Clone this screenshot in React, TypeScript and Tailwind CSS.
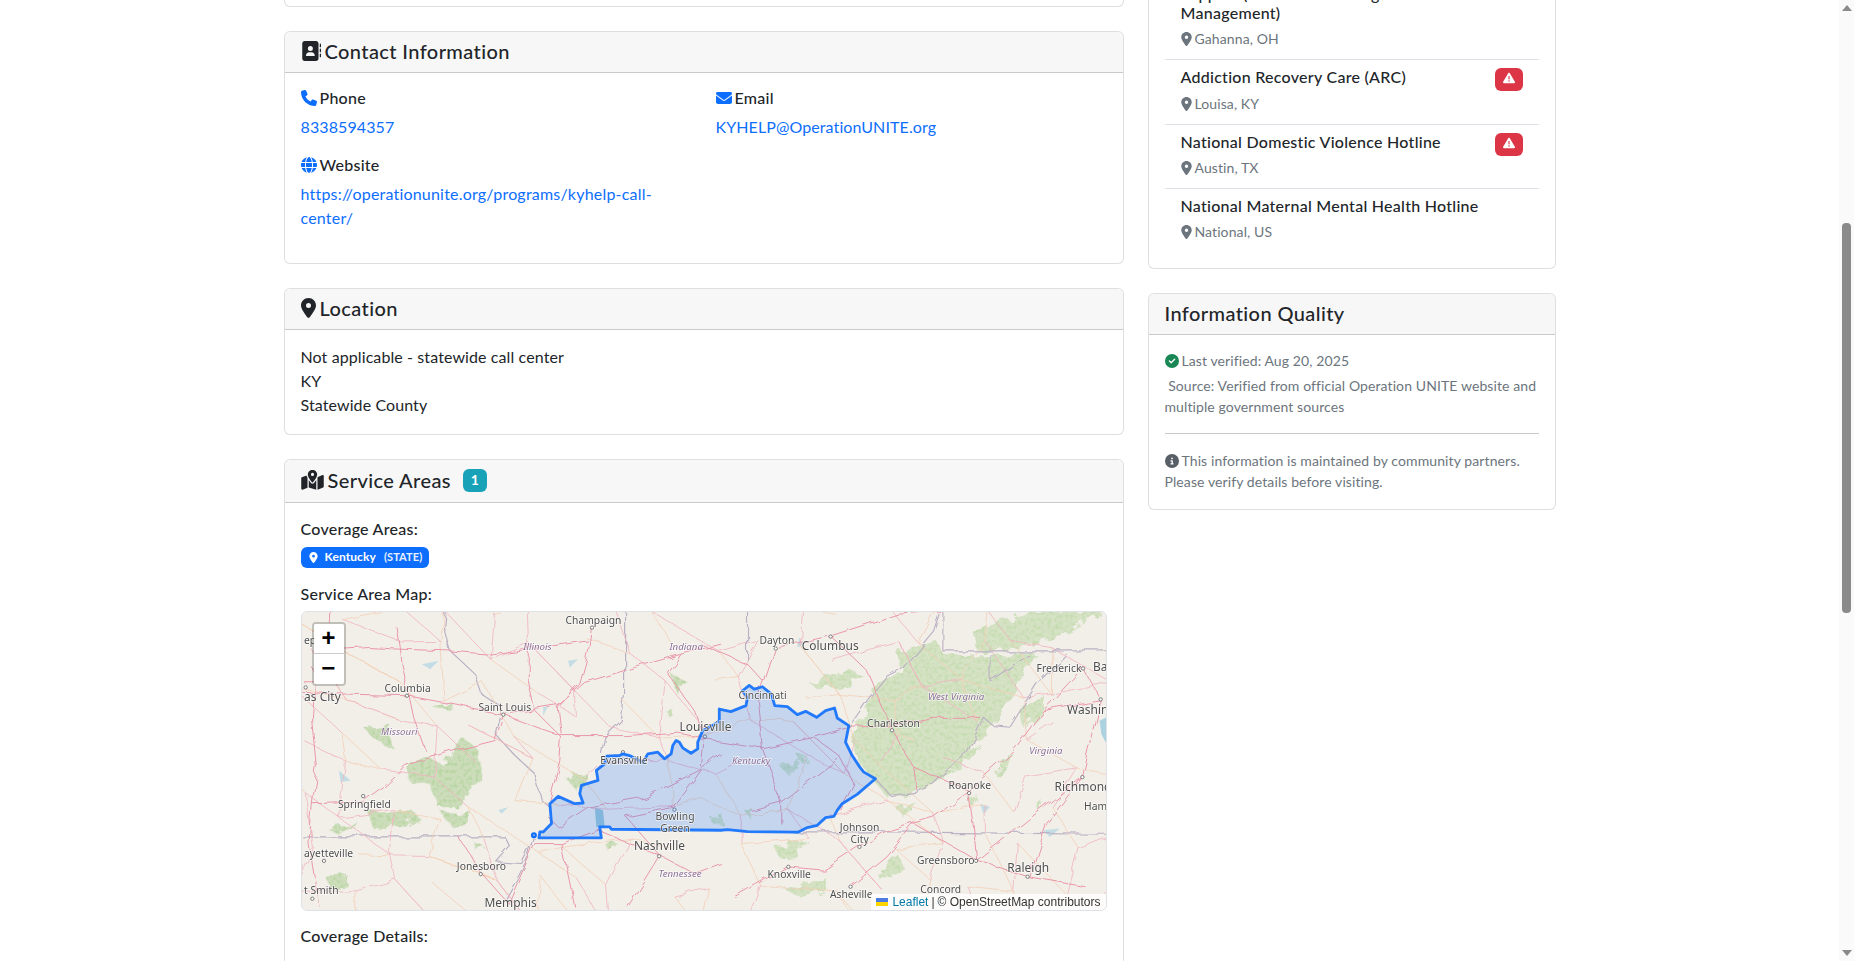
import type { ReactNode } from "react";
import {
  FaAddressBook,
  FaCircleCheck,
  FaCircleInfo,
  FaEnvelope,
  FaGlobe,
  FaLocationDot,
  FaMapLocationDot,
  FaPhone,
  FaTriangleExclamation,
} from "react-icons/fa6";

// map is drawn in a 3x space, x from 3 to 2421, y from 3 to 900
const kentuckyWest = [
  [712, 683], [900, 683], [895, 650], [925, 650], [930, 657], [1260, 660],
];
const kentuckyEast = [
  [80, 658], [140, 664], [292, 666], [320, 652], [350, 645], [375, 622], [400, 618], [410, 600],
  [425, 580], [470, 552], [525, 505], [490, 485], [478, 470], [455, 435], [435, 395], [445, 345],
  [410, 322], [402, 292], [375, 300], [348, 320], [315, 302], [290, 312], [260, 288], [222, 285],
  [212, 250], [185, 228], [160, 235], [145, 224], [125, 240], [140, 262], [135, 285], [90, 303], [55, 295],
];
const kentuckyNorth = [
  [1255, 330], [1240, 342], [1205, 360], [1190, 395], [1190, 415], [1170, 428], [1145, 412], [1135, 395],
  [1125, 390], [1115, 405], [1110, 430], [1090, 445], [1070, 425], [1040, 430], [1025, 455], [985, 435],
  [965, 430], [955, 435], [915, 437], [910, 460], [885, 480], [890, 510], [840, 525], [835, 550],
  [845, 578], [820, 580], [770, 558], [745, 580], [750, 640], [725, 665], [715, 665],
];
const kentucky = [...kentuckyWest, ...kentuckyEast.map(([x, y]) => [x + 1200, y]), ...kentuckyNorth]
  .map((p) => p.join(","))
  .join(" ");

const westPink = [
  "0,245 130,250 315,255 450,280 605,312 770,285 850,215 1000,170 1140,130 1260,100",
  "605,312 720,355 780,375 970,375 1130,365 1210,380",
  "605,312 580,390 420,430 310,465 240,530 180,575 30,580",
  "85,0 85,30 40,210 30,320 45,470 30,580 20,700 50,890",
  "285,50 295,110 300,160 320,250 335,320 370,420",
  "40,120 200,110 295,115 440,120 560,130 680,115 860,90",
  "680,100 680,210 700,300 780,380 775,450 745,570",
  "870,50 860,130 835,220 770,290 780,375",
  "1210,380 1200,480 1120,590 975,620 1075,735",
  "1075,735 890,660 780,700 700,700 620,880",
  "1075,735 1180,790 1260,760",
  "1075,735 980,890",
  "780,700 820,890",
  "540,790 470,680",
  "540,790 620,880",
  "1140,130 1100,190 1180,300 1210,380",
  "1260,430 1195,480 1030,560 860,590 770,650 740,620",
  "0,210 40,210 30,170",
];
const westBorders = [
  "430,0 425,50 445,120 520,190 540,250 600,290 580,370 640,435 700,490 720,570 745,590",
  "695,680 680,740 650,800 610,870",
  "970,0 970,250 960,330 910,380 900,430",
  "0,680 610,680 625,710 585,755 660,760 690,700",
];
const eastPink = [
  "0,100 140,160 190,215 170,270 185,415 210,480 240,575 240,640",
  "190,215 225,110 390,75",
  "390,75 500,180 575,360 640,470 650,540",
  "185,415 340,380 445,350 575,345 700,320 840,320",
  "0,385 185,415",
  "390,75 590,10 720,0",
  "640,470 805,540 940,420 1030,300 1205,270",
  "805,545 700,620 570,660 480,710 370,780 260,770 100,860",
  "1148,500 1040,640 990,800",
  "1148,500 1205,270",
  "1148,500 830,750",
  "830,750 640,640 560,740 450,830",
  "1030,300 1150,170 1200,260",
  "150,600 240,575 420,440",
  "340,380 420,440 460,520 420,600",
  "805,545 820,650 830,750 985,800 1157,830",
];
const eastBorders = [
  "140,0 140,160",
  "525,505 570,555 650,545 700,520 760,460 800,430 850,320 880,345 930,350 1010,220 1100,130",
  "450,350 505,270 560,200 600,180 700,60 720,0",
  "728,0 728,120 1220,120",
  "870,130 870,210 990,130",
  "290,665 570,665 1220,672",
];

// zoom6 space, so 1200 left of the real x
const eastForest = [
  "590,120 710,90 730,130 1010,130 960,210 870,350 780,470 640,550 560,560 470,450 450,370 490,310 510,240 600,180",
  "820,60 1000,0 1220,0 1100,60 930,120 830,120",
  "960,300 1030,250 1020,310 970,350",
  "880,480 940,430 930,470 890,500",
  "590,590 640,570 630,600 600,610",
  "330,220 430,180 490,195 440,225 350,235",
  "225,710 320,690 290,740 240,745",
  "255,840 380,805 370,840 290,860",
  "530,790 590,730 610,770 540,810",
  "240,470 300,450 270,500",
  "285,430 320,440 310,465",
  "30,620 60,605 65,640 35,640",
  "130,600 150,590 145,620",
  "800,560 830,550 810,590",
  "1010,590 1030,570 1020,600",
];
const westForest = [
  "310,465 370,440 420,460 480,380 520,410 545,500 500,540 490,590 410,590 385,520 320,510",
  "420,605 510,610 500,650 450,650",
  "195,600 240,610 330,600 360,630 280,650 220,660",
  "70,650 170,640 110,670",
  "185,350 260,340 270,410 220,390",
  "790,500 860,490 835,550",
  "70,800 135,795 125,835 85,835",
  "900,690 950,700 920,720",
  "1110,190 1160,215 1130,250",
  "1095,300 1110,290 1105,320",
  "390,290 460,280 440,300",
  "520,700 550,710 520,720",
];
const water = [
  "360,160 410,150 385,175",
  "110,480 145,510 115,515",
  "725,290 740,285 725,315",
  "590,600 620,590 600,610",
  "800,150 830,145 805,170",
  "1495,80 1510,100 1490,110",
  "2230,660 2280,655 2250,680",
  "1900,880 1930,860 1920,890",
  "2040,580 2070,590 2050,610",
];

// small roads: a jittered grid, same numbers on every run
const noise = (a: number, b: number) => {
  const v = Math.sin(a * 127.1 + b * 311.7) * 43758.5453;
  return v - Math.floor(v);
};
const gridPoint = (i: number, j: number) => [
  i * 135 + (noise(i, j) - 0.5) * 90,
  j * 118 + (noise(j + 9, i + 3) - 0.5) * 80,
];
const minorPink: string[] = [];
const minorOrange: string[] = [];
for (let i = 0; i < 19; i++) {
  for (let j = 0; j < 9; j++) {
    const from = gridPoint(i, j).join(",");
    const right = gridPoint(i + 1, j + (noise(i, j + 5) > 0.6 ? 1 : 0)).join(",");
    const down = gridPoint(i + (noise(i + 2, j) > 0.6 ? 1 : 0), j + 1).join(",");
    if (noise(i + 7, j + 1) > 0.3) (noise(i, j + 11) > 0.5 ? minorPink : minorOrange).push(`${from} ${right}`);
    if (noise(i + 4, j + 8) > 0.3) (noise(i + 13, j) > 0.5 ? minorPink : minorOrange).push(`${from} ${down}`);
  }
}

type Label = [string, number, number, number?, boolean?];

const labels: Label[] = [
  ["Champaign", 792, 38],
  ["Illinois", 665, 116, 29, true],
  ["Indiana", 1105, 118, 29, true],
  ["Columbia", 247, 243],
  ["as City", 5, 272, 36],
  ["ep", 5, 100],
  ["Saint Louis", 530, 300],
  ["Missouri", 237, 372, 29, true],
  ["Louisville", 1135, 362, 36],
  ["Evansville", 897, 460],
  ["Springfield", 107, 593],
  ["Bowling", 1063, 630],
  ["Green", 1077, 666],
  ["Nashville", 998, 720, 36],
  ["ayetteville", 5, 740],
  ["Jonesboro", 465, 780],
  ["Memphis", 548, 892, 36],
  ["t Smith", 5, 853],
  ["Tennessee", 1072, 802, 29, true],
  ["Dayton", 1376, 100],
  ["Columbus", 1503, 118, 36],
  ["Cincinnati", 1313, 264],
  ["Kentucky", 1293, 461, 29, true],
  ["West Virginia", 1883, 268, 29, true],
  ["Charleston", 1700, 348],
  ["Frederick", 2210, 185],
  ["Ba", 2380, 180, 36],
  ["Washin", 2302, 310, 36],
  ["Virginia", 2188, 430, 29, true],
  ["Roanoke", 1945, 535],
  ["Richmond", 2264, 543, 36],
  ["Ham", 2353, 600],
  ["Johnson", 1618, 662],
  ["City", 1650, 698],
  ["Knoxville", 1400, 803],
  ["Greensboro", 1850, 762],
  ["Raleigh", 2122, 785, 36],
  ["Asheville", 1588, 865],
  ["Concord", 1860, 850],
];

const towns = [
  [872, 50], [315, 255], [605, 312], [183, 557], [1120, 598], [1074, 738], [537, 792], [65, 752], [30, 866],
  [1425, 113], [1590, 77], [1775, 359], [2007, 548], [2348, 500], [1677, 710], [1463, 770], [2028, 752],
  [2183, 800], [2350, 173], [2403, 266], [1650, 830], [10, 230], [965, 425], [1212, 378],
];

function Lines({ items, color, width = 3 }: { items: string[]; color: string; width?: number }) {
  return (
    <g fill="none" stroke={color} strokeWidth={width} strokeLinejoin="round">
      {items.map((p) => (
        <polyline key={p} points={p} />
      ))}
    </g>
  );
}

function ServiceMap() {
  return (
    <div className="relative h-[300px] overflow-hidden rounded-md border border-[#dee2e6] bg-[#f2efe9]">
      <svg viewBox="3 3 2418 897" className="block h-[298px] w-[806px] blur-[0.35px]">
        <defs>
          <filter id="rough" x="-5%" y="-5%" width="110%" height="110%">
            <feTurbulence type="fractalNoise" baseFrequency="0.025" numOctaves="3" seed="4" result="edge" />
            <feDisplacementMap in="SourceGraphic" in2="edge" scale="38" result="shape" />
            <feTurbulence type="fractalNoise" baseFrequency="0.09" numOctaves="2" seed="11" result="speck" />
            <feColorMatrix
              in="speck"
              type="matrix"
              values="0 0 0 0 0  0 0 0 0 0  0 0 0 0 0  3 0 0 0 -1.3"
              result="speckAlpha"
            />
            <feComposite in="shape" in2="speckAlpha" operator="in" result="dappled" />
            <feComponentTransfer in="shape" result="faded">
              <feFuncA type="linear" slope="0.65" />
            </feComponentTransfer>
            <feMerge>
              <feMergeNode in="faded" />
              <feMergeNode in="dappled" />
            </feMerge>
          </filter>
          <filter id="wiggle" x="-5%" y="-5%" width="110%" height="110%">
            <feTurbulence type="fractalNoise" baseFrequency="0.02" numOctaves="2" seed="8" />
            <feDisplacementMap in="SourceGraphic" scale="22" />
          </filter>
        </defs>
        <rect x="3" y="3" width="2418" height="897" fill="#f2efe9" />
        <g filter="url(#rough)">
          {westForest.map((p) => (
            <polygon key={p} points={p} fill="#b8d4a2" />
          ))}
          <g transform="translate(1200 0)">
            {eastForest.map((p) => (
              <polygon key={p} points={p} fill="#c5dbb0" />
            ))}
          </g>
        </g>
        {water.map((p) => (
          <polygon key={p} points={p} fill="#c4dde4" />
        ))}
        <polygon points="880,590 905,600 910,650 885,650" fill="#9fc9d4" />
        <polygon points="2400,330 2421,320 2421,400 2405,370" fill="#aad3df" />
        <g filter="url(#wiggle)">
          <Lines items={westBorders} color="#b9aec2" width={3.5} />
          <Lines items={minorOrange} color="#f3d0b6" width={2.5} />
          <Lines items={minorPink} color="#f0b4c0" width={2.5} />
          <Lines items={westPink} color="#ea96a9" />
          <g transform="translate(1200 0)">
            <Lines items={eastBorders} color="#bcb1c4" width={3.5} />
            <Lines items={eastPink} color="#ea96a9" />
          </g>
        </g>
        {towns.map(([x, y]) => (
          <circle key={`${x}-${y}`} cx={x} cy={y} r="5" fill="#fff" stroke="#666" strokeWidth="2.5" />
        ))}
        <polygon
          points={kentucky}
          fill="#0d6efd"
          fillOpacity="0.2"
          stroke="#0d6efd"
          strokeOpacity="0.9"
          strokeWidth="8.5"
          strokeLinejoin="round"
        />
        <circle cx="697" cy="675" r="6" fill="#7fb0f0" stroke="#0d6efd" strokeWidth="6" />
        <g className="[font-family:'Noto_Sans',sans-serif]">
          {labels.map(([text, x, y, size = 31, italic]) => (
            <text
              key={text}
              x={x}
              y={y}
              fontSize={size}
              fontStyle={italic ? "italic" : "normal"}
              fill={italic ? "#8a6f96" : "#4d4d4d"}
              stroke="#fff"
              strokeOpacity="0.75"
              strokeWidth="4"
              className="[paint-order:stroke]"
            >
              {text}
            </text>
          ))}
        </g>
      </svg>
      <div className="absolute left-[10px] top-[10px] flex w-[34px] flex-col rounded-[4px] border-2 border-black/20 bg-clip-padding">
        <button className="flex h-[30px] items-center justify-center rounded-t-[2px] border-b border-[#ccc] bg-white pt-[3px] text-[24px] font-bold leading-none text-black [font-family:'Liberation_Mono',monospace]">
          +
        </button>
        <button className="flex h-[30px] items-center justify-center rounded-b-[2px] bg-white pt-[3px] text-[24px] font-bold leading-none text-black [font-family:'Liberation_Mono',monospace]">
          −
        </button>
      </div>
      <div className="absolute bottom-0 right-0 flex h-[16px] items-center bg-white/80 px-[5px] text-[12px] leading-none tracking-normal text-[#333] [font-family:'Liberation_Sans',sans-serif]">
        <svg viewBox="0 0 12 8" className="mr-[4px] h-[8px] w-[12px]">
          <rect width="12" height="4" fill="#4C7BE1" />
          <rect y="4" width="12" height="4" fill="#FFD500" />
        </svg>
        <a className="text-[#0078A8]">Leaflet</a>
        <span className="mx-[3px]">|</span>© OpenStreetMap contributors
      </div>
    </div>
  );
}

function Card({ header, children, className = "" }: { header?: ReactNode; children: ReactNode; className?: string }) {
  return (
    <div className={`rounded-md border border-black/[.125] bg-white ${className}`}>
      {header && (
        <div className="flex items-center rounded-t-md border-b border-black/[.18] bg-[#f7f7f7] px-4 pb-[9px] pt-[7px]">
          {header}
        </div>
      )}
      <div className="px-4 pb-[17px] pt-[15px]">{children}</div>
    </div>
  );
}

function Label({ icon, children }: { icon?: ReactNode; children: ReactNode }) {
  return (
    <h6 className="mb-2 flex h-[19.2px] items-center gap-[3px] text-base font-medium leading-[19.2px] tracking-[0.25px]">
      {icon}
      {children}
    </h6>
  );
}

function Nearby({ title, place, alert }: { title: ReactNode; place: string; alert?: boolean }) {
  return (
    <div className="flex justify-between border-b border-[#dee2e6] px-4 pb-2 pt-[7px] last:border-b-0">
      <div>
        <div className="mb-[5px] text-base font-medium leading-[19.2px] tracking-[0.27px]">{title}</div>
        <div className="flex h-6 items-center gap-[3px] text-sm text-[#6c757d]">
          <FaLocationDot className="h-[14px] w-[11px]" />
          {place}
        </div>
      </div>
      {alert && (
        <span className="mt-px flex h-[23px] w-[28px] items-center justify-center self-start rounded-md bg-[#dc3545] pb-[3px]">
          <FaTriangleExclamation className="h-[12px] w-[12px] text-white" />
        </span>
      )}
    </div>
  );
}

export default function App() {
  return (
    <div className="flex h-[961px] overflow-hidden bg-white tracking-[0.1px] text-[#212529] [font-family:Lato,sans-serif]">
      <div className="flex flex-1 gap-6 pl-[283.5px]">
        <div className="flex w-[840px] flex-col gap-6">
          <div className="-mt-[93px] h-[100px] shrink-0 rounded-md border border-black/[.125] bg-white" />

          <Card
            header={
              <h5 className="flex h-6 items-center gap-[4px] text-xl font-medium leading-6 tracking-[0.4px]">
                <FaAddressBook className="h-5 w-5" />
                Contact Information
              </h5>
            }
          >
            <div className="grid grid-cols-2 gap-x-6">
              <div className="mb-4">
                <Label icon={<FaPhone className="h-4 w-4 text-[#0d6efd]" />}>Phone</Label>
                <a className="text-[#0d6efd]">8338594357</a>
              </div>
              <div className="mb-4">
                <Label icon={<FaEnvelope className="h-4 w-4 text-[#0d6efd]" />}>Email</Label>
                <a className="text-[#0d6efd]">KYHELP@OperationUNITE.org</a>
              </div>
              <div className="mb-4">
                <Label icon={<FaGlobe className="h-4 w-4 text-[#0d6efd]" />}>Website</Label>
                <a className="tracking-[0.2px] text-[#0d6efd]">https://operationunite.org/programs/kyhelp-call-center/</a>
              </div>
            </div>
          </Card>

          <Card
            header={
              <h5 className="flex h-6 items-center gap-[4px] text-xl font-medium leading-6 tracking-[0.4px]">
                <FaLocationDot className="h-5 w-[15px]" />
                Location
              </h5>
            }
          >
            <p>
              Not applicable - statewide call center
              <br />
              KY
              <br />
              Statewide County
            </p>
          </Card>

          <Card
            header={
              <div className="flex h-[26px] items-center">
                <h5 className="flex items-center gap-[4px] text-xl font-medium leading-6 tracking-[0.4px]">
                  <FaMapLocationDot className="h-5 w-[23px]" />
                  Service Areas
                </h5>
                <span className="ml-3 flex h-[23px] w-6 items-center justify-center rounded-md bg-[#17a2b8] text-sm font-bold text-white">
                  1
                </span>
              </div>
            }
          >
            <div className="pt-px">
              <Label>Coverage Areas:</Label>
              <span className="mb-4 flex h-[21px] w-[128px] items-center rounded-md bg-[#0d6efd] pl-[8px] text-xs font-bold text-white">
                <FaLocationDot className="mr-[7px] h-[11px] w-[9px]" />
                Kentucky
                <span className="ml-[8px] text-[11px] opacity-90">(STATE)</span>
              </span>
              <Label>Service Area Map:</Label>
              <ServiceMap />
              <div className="mt-[15px]">
                <Label>Coverage Details:</Label>
              </div>
            </div>
          </Card>
        </div>

        <div className="flex w-[408px] flex-col gap-6">
          <Card className="-mt-[39px] shrink-0">
            <div className="-mb-px">
              <Nearby
                title={
                  <>
                    Support (Care Coordinating
                    <br />
                    Management)
                  </>
                }
                place="Gahanna, OH"
              />
              <Nearby title="Addiction Recovery Care (ARC)" place="Louisa, KY" alert />
              <Nearby title="National Domestic Violence Hotline" place="Austin, TX" alert />
              <Nearby title="National Maternal Mental Health Hotline" place="National, US" />
            </div>
          </Card>

          <Card
            className="shrink-0"
            header={<h5 className="h-6 text-xl font-medium leading-6 tracking-[0.4px]">Information Quality</h5>}
          >
            <div className="text-sm leading-[21px] text-[#6c757d]">
              <div className="mb-1 flex items-center gap-[3px]">
                <FaCircleCheck className="h-[14px] w-[14px] text-[#198754]" />
                Last verified: Aug 20, 2025
              </div>
              <div>&nbsp;Source: Verified from official Operation UNITE website and multiple government sources</div>
              <hr className="my-4 border-[#c9c9c9]" />
              <div>
                <FaCircleInfo className="mr-[3px] inline h-[14px] w-[14px] align-[-2px] text-[#595f66]" />
                This information is maintained by community partners. Please verify details before visiting.
              </div>
            </div>
          </Card>
        </div>
      </div>

      {/* scrollbar drawn by hand, the page here is a still */}
      <div className="flex w-[15px] shrink-0 flex-col items-center bg-[#fafafa]">
        <svg viewBox="0 0 10 6" className="mt-[5px] h-[6px] w-[10px]">
          <polygon points="5,0 10,6 0,6" fill="#8a8a8a" />
        </svg>
        <div className="mt-[212px] h-[390px] w-[9px] rounded-[4px] bg-[#8a8a8a]" />
        <svg viewBox="0 0 10 6" className="mt-auto mb-[5px] h-[6px] w-[10px]">
          <polygon points="0,0 10,0 5,6" fill="#8a8a8a" />
        </svg>
      </div>
    </div>
  );
}
